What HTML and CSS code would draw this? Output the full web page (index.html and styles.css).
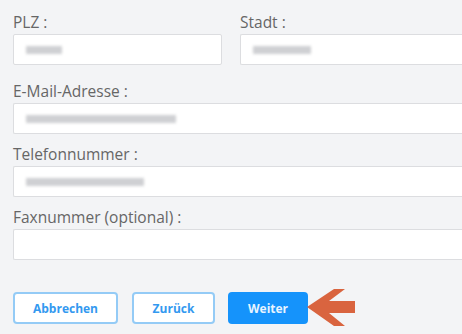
FILE: index.html
```html
<!DOCTYPE html>
<html lang="de">
<head>
    <meta charset="UTF-8">
    <meta name="viewport" content="width=device-width, initial-scale=1.0">
    <title>Kontaktdaten</title>
    <link rel="stylesheet" href="styles.css">
</head>
<body>
    <form class="form">
        <div class="row">
            <div class="field">
                <label>PLZ :</label>
                <div class="input input-closed"><span class="blur" style="width: 36px"></span></div>
            </div>
            <div class="field">
                <label>Stadt :</label>
                <div class="input"><span class="blur" style="width: 58px"></span></div>
            </div>
        </div>
        <div class="field">
            <label>E-Mail-Adresse :</label>
            <div class="input"><span class="blur" style="width: 150px"></span></div>
        </div>
        <div class="field">
            <label>Telefonnummer :</label>
            <div class="input"><span class="blur" style="width: 118px"></span></div>
        </div>
        <div class="field">
            <label>Faxnummer (optional) :</label>
            <div class="input"></div>
        </div>

        <div class="actions">
            <button type="button" class="btn btn-outline">Abbrechen</button>
            <button type="button" class="btn btn-outline btn-back">Zurück</button>
            <button type="submit" class="btn btn-primary">Weiter</button>
            <svg class="arrow" width="48" height="38" viewBox="0 0 48 38">
                <polygon points="0,18 27,0 38,0 22,12 48,12 48,24 22,24 38,37 27,37" fill="#d9643f"/>
            </svg>
        </div>
    </form>
</body>
</html>
```

FILE: styles.css
```css
* {
    margin: 0;
    padding: 0;
    box-sizing: border-box;
    font-family: 'Open Sans', sans-serif;
}

html, body {
    overflow: hidden;
}

body {
    background: #f3f4f6;
    padding: 12px 0 0 13px;
}

.row {
    display: grid;
    grid-template-columns: 209px 1fr;
    column-gap: 18px;
    margin-bottom: 16px;
}

.field {
    margin-bottom: 10px;
}

.row .field {
    margin-bottom: 0;
}

.field label {
    display: block;
    font-size: 15.5px;
    line-height: 20px;
    color: #666;
    margin-bottom: 2px;
}

.input {
    height: 31px;
    background: #fff;
    border: 1px solid #dcdde0;
    border-right: none;
    border-radius: 2px 0 0 2px;
    display: flex;
    align-items: center;
    padding: 0 12px;
}

.input-closed {
    border-right: 1px solid #dcdde0;
    border-radius: 2px;
}

.blur {
    display: block;
    height: 8px;
    background: #cfd0d3;
    filter: blur(1.5px);
}

.actions {
    display: flex;
    align-items: center;
    margin-top: 29px;
}

.btn {
    height: 32px;
    border-radius: 4px;
    font-size: 12px;
    font-weight: 700;
    cursor: pointer;
    margin-right: 14px;
}

.btn-outline {
    width: 105px;
    background: #fff;
    border: 2px solid #94cbf6;
    color: #3399f0;
}

.btn-back {
    width: 83px;
    margin-right: 13px;
}

.btn-primary {
    width: 80px;
    background: #1593fb;
    border: none;
    color: #e8f4ff;
    margin-right: 0;
}

.arrow {
    margin-left: -1px;
}
```
